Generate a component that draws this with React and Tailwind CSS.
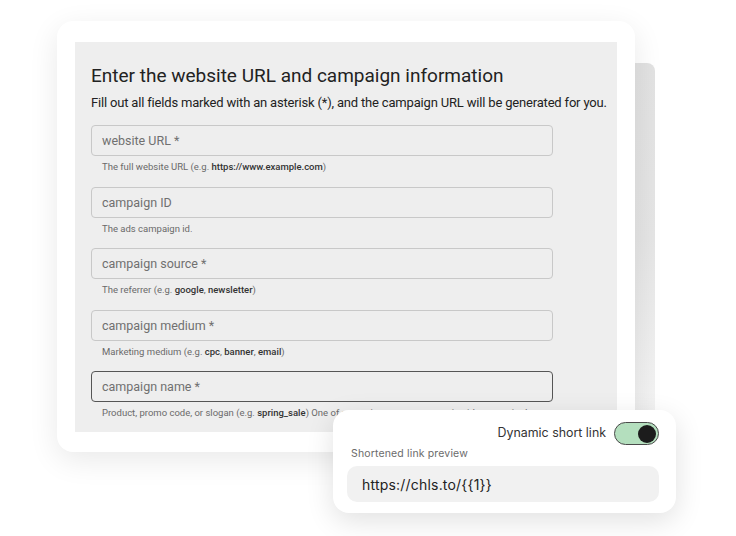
import React from "react";

const fields = [
  {
    label: "website URL *",
    help: (
      <>
        The full website URL (e.g. <b className="font-medium text-[#333]">https://www.example.com</b>)
      </>
    ),
  },
  { label: "campaign ID", help: <>The ads campaign id.</> },
  {
    label: "campaign source *",
    help: (
      <>
        The referrer (e.g. <b className="font-medium text-[#333]">google</b>,{" "}
        <b className="font-medium text-[#333]">newsletter</b>)
      </>
    ),
  },
  {
    label: "campaign medium *",
    help: (
      <>
        Marketing medium (e.g. <b className="font-medium text-[#333]">cpc</b>,{" "}
        <b className="font-medium text-[#333]">banner</b>,{" "}
        <b className="font-medium text-[#333]">email</b>)
      </>
    ),
  },
  {
    label: "campaign name *",
    focused: true,
    help: (
      <>
        Product, promo code, or slogan (e.g. <b className="font-medium text-[#333]">spring_sale</b>) One of
        campaign name or campaign id are required.
      </>
    ),
  },
];

const Field = ({ label, help, focused }) => (
  <div className="flex flex-col">
    <div
      className={`h-[31px] w-[462px] rounded-[4px] flex items-center pl-[10px] pt-[2px] text-[12.5px] text-[#707070] ${
        focused ? "border-[1.5px] border-[#555]" : "border border-[#c8c8c8]"
      }`}
    >
      {label}
    </div>
    <div className="mt-[4px] pl-[11px] text-[9.5px] leading-[14px] text-[#6a6a6a] whitespace-nowrap">
      {help}
    </div>
  </div>
);

const App = () => {
  return (
    <div className="relative w-[736px] h-[536px] bg-white overflow-hidden font-['Roboto',sans-serif]">
      {/* card peeking from behind */}
      <div className="absolute left-[560px] top-[63px] w-[95px] h-[350px] rounded-tr-lg bg-gradient-to-b from-[#e2e2e2] via-[#e5e5e5] to-[#f4f4f4]" />

      <div className="relative pl-[57px] pt-[21px]">
        <div className="w-[578px] h-[431px] rounded-[16px] bg-white pl-[18px] pt-[21px] shadow-[0_8px_30px_rgba(0,0,0,0.09)]">
          <div className="w-[542px] h-[390px] bg-[#eeeeee] overflow-hidden pl-[16px] pt-[20px]">
            <h1 className="text-[19px] leading-[28px] text-[#222]">
              Enter the website URL and campaign information
            </h1>
            <p className="mt-[3px] text-[13px] tracking-[-0.18px] leading-[20px] text-[#222] whitespace-nowrap">
              Fill out all fields marked with an asterisk (*), and the campaign URL will be generated for you.
            </p>
            <div className="mt-[12px] flex flex-col gap-[12.5px]">
              {fields.map((f) => (
                <Field key={f.label} {...f} />
              ))}
            </div>
          </div>
        </div>
      </div>

      {/* short link popup */}
      <div className="absolute left-[333px] top-[410px] w-[343px] h-[103px] rounded-[16px] bg-white pl-[14px] pr-[17px] pt-[12px] shadow-[0_8px_28px_rgba(0,0,0,0.12)] font-['Inter',sans-serif]">
        <div className="flex items-center justify-end gap-[8px]">
          <span className="text-[12.4px] text-[#333]">Dynamic short link</span>
          <div className="w-[45px] h-[23px] rounded-full bg-[#b4dfbe] border-[1.5px] border-[#4a4a4a] flex items-center justify-end pr-[2px]">
            <div className="w-[18px] h-[18px] rounded-full bg-[#1c1c1c]" />
          </div>
        </div>
        <div className="mt-[2px] pl-[4px] text-[10.5px] leading-[14px] tracking-[0.15px] text-[#6b6b6b]">
          Shortened link preview
        </div>
        <div className="mt-[5px] h-[36px] rounded-[10px] bg-[#f1f1f1] flex items-center pl-[15px] text-[14px] text-[#222] tracking-[0.2px]">
          https://chls.to/{"{{1}}"}
        </div>
      </div>
    </div>
  );
};

export default App;
